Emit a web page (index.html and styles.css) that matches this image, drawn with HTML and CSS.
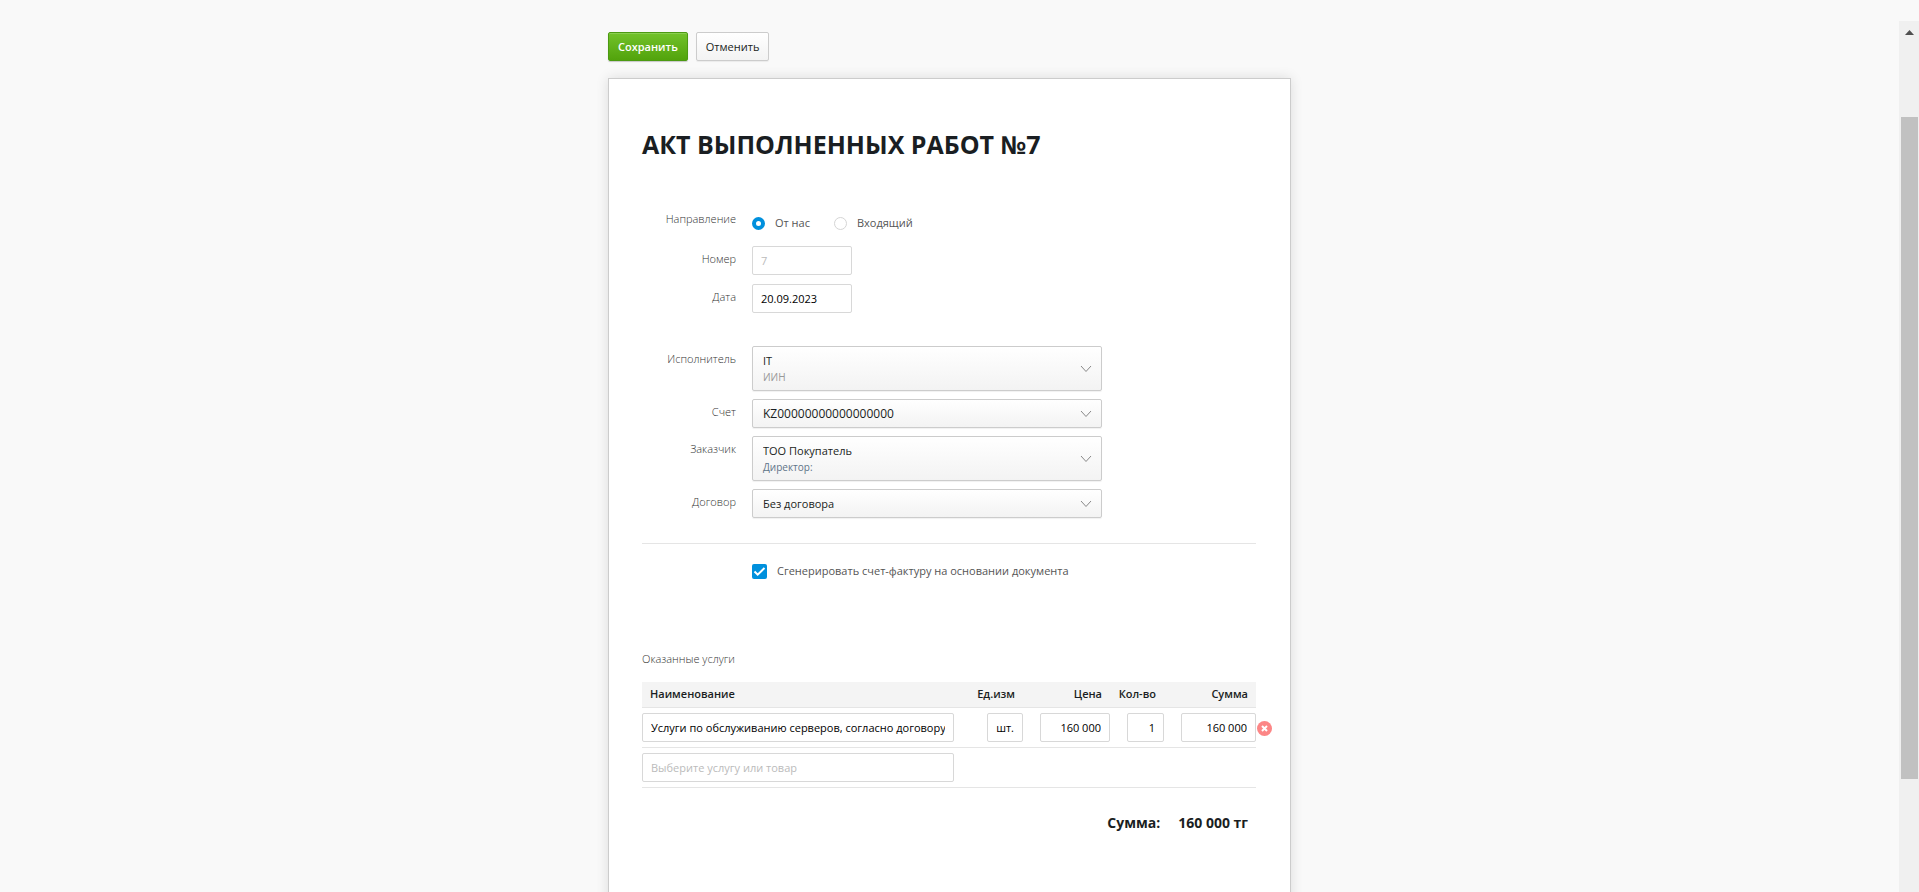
FILE: index.html
```html
<!DOCTYPE html>
<html lang="ru">
<head>
    <meta charset="utf-8">
    <title>Акт выполненных работ №7</title>
    <link rel="stylesheet" href="styles.css">
</head>
<body>
    <main class="content">
        <form class="document">
            <div class="toolbar">
                <button type="submit" class="btn btn-primary">Сохранить</button>
                <button type="button" class="btn">Отменить</button>
            </div>

            <div class="paper">
                <h1>АКТ ВЫПОЛНЕННЫХ РАБОТ №7</h1>

                <div class="fields">
                    <div class="row row-radio" role="radiogroup" aria-labelledby="dirLabel">
                        <span class="row-label" id="dirLabel">Направление</span>
                        <div class="radios">
                            <label class="choice"><input type="radio" name="direction" checked>От нас</label>
                            <label class="choice"><input type="radio" name="direction">Входящий</label>
                        </div>
                    </div>
                    <div class="row">
                        <label class="row-label" for="number">Номер</label>
                        <input class="input short" type="text" id="number" placeholder="7">
                    </div>
                    <div class="row">
                        <label class="row-label" for="date">Дата</label>
                        <input class="input short" type="text" id="date" value="20.09.2023">
                    </div>
                </div>

                <div class="fields parties">
                    <div class="row">
                        <label class="row-label" for="executor">Исполнитель</label>
                        <div class="select tall">
                            <select id="executor"><option>IT</option></select>
                            <span class="note muted">ИИН</span>
                            <svg class="chevron" width="12" height="8" viewBox="0 0 12 8"><path d="M1 1l5 5.5L11 1"/></svg>
                        </div>
                    </div>
                    <div class="row">
                        <label class="row-label" for="account">Счет</label>
                        <div class="select account">
                            <select id="account"><option>KZ00000000000000000</option></select>
                            <svg class="chevron" width="12" height="8" viewBox="0 0 12 8"><path d="M1 1l5 5.5L11 1"/></svg>
                        </div>
                    </div>
                    <div class="row">
                        <label class="row-label" for="customer">Заказчик</label>
                        <div class="select tall">
                            <select id="customer"><option>ТОО Покупатель</option></select>
                            <span class="note">Директор:</span>
                            <svg class="chevron" width="12" height="8" viewBox="0 0 12 8"><path d="M1 1l5 5.5L11 1"/></svg>
                        </div>
                    </div>
                    <div class="row">
                        <label class="row-label" for="contract">Договор</label>
                        <div class="select">
                            <select id="contract"><option>Без договора</option></select>
                            <svg class="chevron" width="12" height="8" viewBox="0 0 12 8"><path d="M1 1l5 5.5L11 1"/></svg>
                        </div>
                    </div>
                </div>

                <div class="invoice">
                    <label class="choice">
                        <span class="tick">
                            <input type="checkbox" checked>
                            <svg width="15" height="15" viewBox="0 0 15 15"><path d="M2.500 7.500l3.200 3.200L12.500 4"/></svg>
                        </span>
                        Сгенерировать счет-фактуру на основании документа
                    </label>
                </div>

                <h2>Оказанные услуги</h2>
                <table class="services">
                    <thead>
                        <tr>
                            <th class="col-name">Наименование</th>
                            <th class="col-unit">Ед.изм</th>
                            <th class="col-price">Цена</th>
                            <th class="col-qty">Кол-во</th>
                            <th class="col-sum">Сумма</th>
                        </tr>
                    </thead>
                    <tbody>
                        <tr>
                            <td><input class="input" type="text" aria-label="Наименование" value="Услуги по обслуживанию серверов, согласно договору"></td>
                            <td><input class="input unit" type="text" aria-label="Ед.изм" value="шт."></td>
                            <td><input class="input price" type="text" aria-label="Цена" value="160 000"></td>
                            <td><input class="input qty" type="text" aria-label="Кол-во" value="1"></td>
                            <td class="last">
                                <input class="input sum" type="text" aria-label="Сумма" value="160 000">
                                <button type="button" class="remove" aria-label="Удалить">
                                    <svg width="15" height="15" viewBox="0 0 15 15"><circle cx="7.5" cy="7.5" r="7.5"/><path d="M5 5l5 5M10 5l-5 5"/></svg>
                                </button>
                            </td>
                        </tr>
                        <tr>
                            <td><input class="input" type="text" aria-label="Услуга или товар" placeholder="Выберите услугу или товар"></td>
                            <td></td>
                            <td></td>
                            <td></td>
                            <td></td>
                        </tr>
                    </tbody>
                </table>

                <div class="total">
                    <span>Сумма:</span>
                    <span>160 000 тг</span>
                </div>
            </div>
        </form>
    </main>

    <div class="scrollbar">
        <div class="scroll-up"><svg width="9" height="5" viewBox="0 0 9 5"><path d="M0 5L4.500 0L9 5z"/></svg></div>
        <div class="scroll-thumb"></div>
    </div>
</body>
</html>
```
FILE: styles.css
```css
* {
    box-sizing: border-box;
}
body {
    margin: 0;
    display: flex;
    height: 100vh;
    overflow: hidden;
    background: #f9f9f9;
    color: #1a1e22;
    font: 11px/18px "Open Sans", "Noto Sans", sans-serif;
}
input, select, button {
    margin: 0;
    font: inherit;
    color: inherit;
}
.content {
    flex: 1;
    overflow: hidden;
}
.document {
    max-width: 683px;
    margin: 0 auto;
    padding-top: 32px;
}

/* buttons */
.toolbar {
    display: flex;
    gap: 8px;
    margin-bottom: 17px;
}
.btn {
    height: 29px;
    padding: 0 9px;
    border: 1px solid #ccc;
    border-radius: 2px;
    background: linear-gradient(#fff, #f3f3f3);
    box-shadow: 0 1px 1px rgba(0, 0, 0, 0.06);
    cursor: pointer;
}
.btn-primary {
    border-color: #4c9a12;
    background: linear-gradient(#72c22a, #52a30c);
    box-shadow: inset 0 1px 0 #8ace50, 0 1px 1px rgba(0, 0, 0, 0.2);
    color: #fff;
    font-weight: 600;
}

.paper {
    min-height: 100vh;
    padding: 47px 34px 60px 33px;
    border: 1px solid #ccc;
    background: #fff;
    box-shadow: 0 0 12px rgba(0, 0, 0, 0.12);
}
h1 {
    margin: 0 0 44px;
    font-size: 25px;
    line-height: 36px;
    font-weight: 700;
}

/* form rows */
.fields {
    display: flex;
    flex-direction: column;
    gap: 9px;
}
.parties {
    gap: 8px;
    margin-top: 33px;
}
.row {
    display: grid;
    grid-template-columns: 94px 1fr;
    column-gap: 16px;
    align-items: start;
}
.row-label {
    padding-top: 4px;
    text-align: right;
    font-weight: 300;
    color: #333;
}
.row-radio {
    height: 31px;
}
.radios {
    display: flex;
    gap: 24px;
    padding-top: 8px;
}
.choice {
    display: flex;
    align-items: center;
    gap: 10px;
    color: #555;
}
input[type="radio"] {
    appearance: none;
    width: 13px;
    height: 13px;
    border: 1px solid #d5d5d5;
    border-radius: 50%;
    background: #fff;
}
input[type="radio"]:checked {
    border: 4px solid #0090dd;
}
.input {
    display: block;
    width: 100%;
    height: 29px;
    padding: 0 8px;
    border: 1px solid #d8d8d8;
    border-radius: 2px;
    background: #fff;
    color: #000;
}
.input::placeholder {
    color: #bbb;
    opacity: 1;
}
.short {
    width: 100px;
}

/* drop-downs, the note and the arrow share the cell with the select */
.select {
    display: grid;
    max-width: 350px;
}
.select > * {
    grid-area: 1 / 1;
}
.select select {
    appearance: none;
    height: 29px;
    padding: 0 30px 0 10px;
    border: 1px solid #ccc;
    border-radius: 2px;
    background: linear-gradient(#fff, #f3f3f3);
    box-shadow: 0 1px 1px rgba(0, 0, 0, 0.06);
}
.tall select {
    height: 45px;
    padding-bottom: 16px;
}
.account {
    font-size: 12px;
}
.note {
    align-self: end;
    padding: 0 0 5px 11px;
    font-size: 10px;
    pointer-events: none;
    color: #5f7488;
}
.muted {
    color: #999;
}
.chevron {
    align-self: center;
    justify-self: end;
    margin-right: 10px;
    pointer-events: none;
    fill: none;
    stroke: #888;
}

.invoice {
    display: flex;
    margin-top: 25px;
    padding: 18px 0 0 110px;
    border-top: 1px solid #e5e5e5;
}
.tick {
    display: grid;
}
.tick > * {
    grid-area: 1 / 1;
}
input[type="checkbox"] {
    appearance: none;
    width: 15px;
    height: 15px;
    border-radius: 2px;
    background: #0090dd;
}
.tick svg {
    fill: none;
    stroke: #fff;
    stroke-width: 2;
    pointer-events: none;
}

/* services */
h2 {
    margin: 69px 0 13px;
    font-size: 11px;
    line-height: 20px;
    font-weight: 300;
    color: #333;
}
.services {
    width: 100%;
    border-collapse: collapse;
    table-layout: fixed;
}
.services th {
    height: 25px;
    padding: 0 8px;
    background: #f4f4f4;
    border-bottom: 1px solid #e5e5e5;
    text-align: right;
    font-weight: 600;
    white-space: nowrap;
}
.services .col-name {
    width: 312px;
    text-align: left;
}
.col-unit {
    width: 69px;
}
.col-price {
    width: 87px;
}
.col-qty {
    width: 54px;
}
.services td {
    height: 40px;
    padding: 5px 0;
    border-bottom: 1px solid #e5e5e5;
}
.services td:not(:first-child) .input {
    margin-left: auto;
    text-align: right;
}
.unit {
    width: 36px;
}
.price {
    width: 70px;
}
.qty {
    width: 37px;
}
.sum {
    width: 75px;
}
.last {
    position: relative;
}
.remove {
    position: absolute;
    left: 100%;
    top: 13px;
    display: flex;
    margin-left: 1px;
    padding: 0;
    border: 0;
    background: none;
    cursor: pointer;
}
.remove circle {
    fill: #fc8686;
}
.remove path {
    stroke: #fff;
    stroke-width: 2;
}
.total {
    display: flex;
    justify-content: flex-end;
    gap: 18px;
    padding: 23px 8px 0 0;
    font-size: 14px;
    line-height: 24px;
    font-weight: 700;
}

.scrollbar {
    width: 20px;
    margin-top: 21px;
    padding: 0 1px 0 2px;
    background: #f0f0f0;
}
.scroll-up {
    height: 11%;
    padding-top: 9px;
    line-height: 0;
    text-align: center;
}
.scroll-up svg {
    fill: #505050;
}
.scroll-thumb {
    height: 76%;
    background: #c1c1c1;
}
```
